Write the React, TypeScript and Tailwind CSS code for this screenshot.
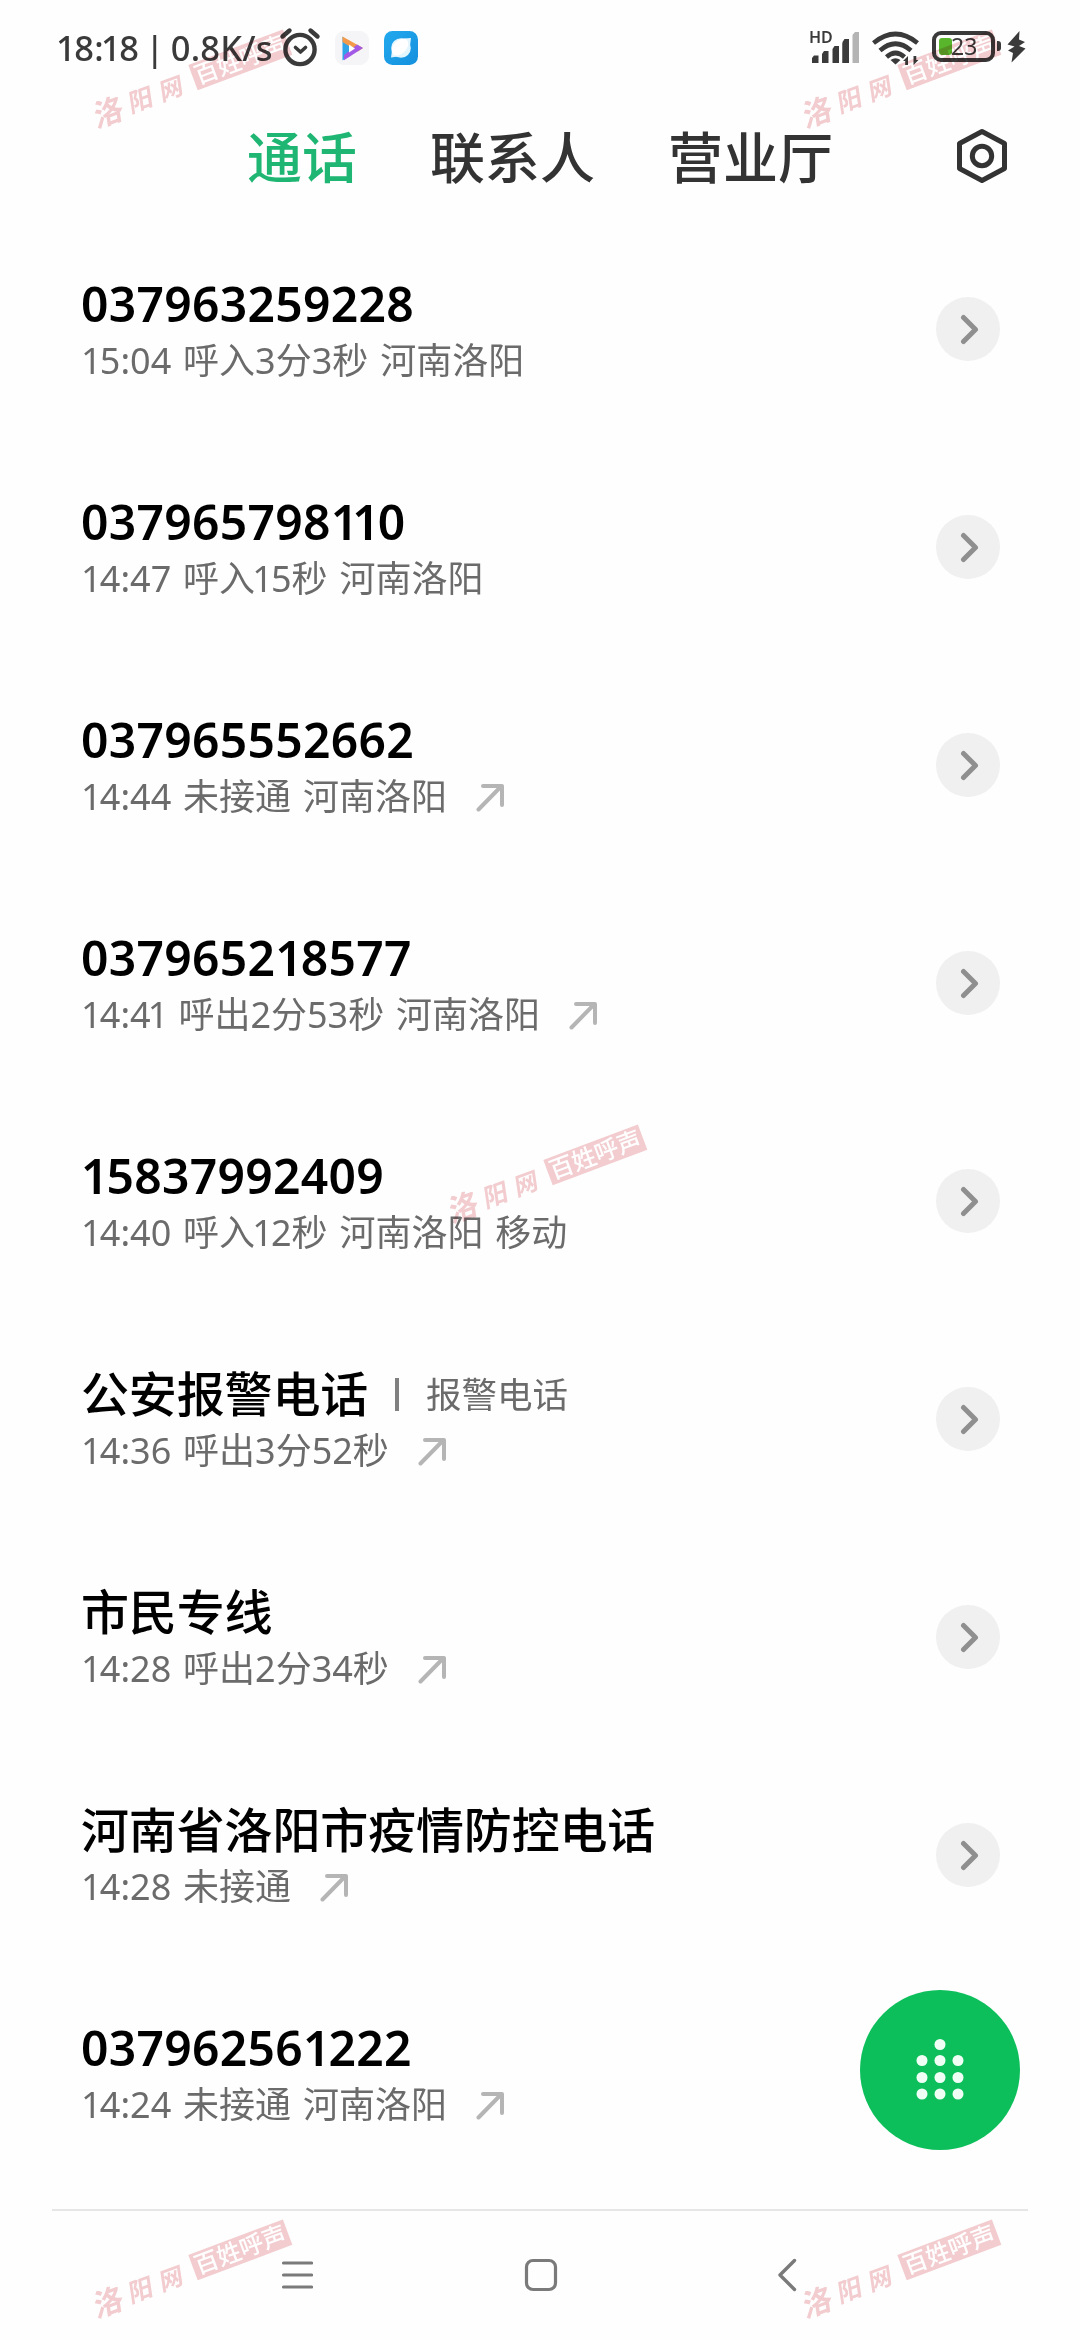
import { Fragment } from "react";

type Call = {
  name: string;
  label?: string;
  detail: string;
  outgoing?: boolean;
};

const calls: Call[] = [
  { name: "037963259228", detail: "15:04 呼入3分3秒 河南洛阳" },
  { name: "037965798110", detail: "14:47 呼入15秒 河南洛阳" },
  { name: "037965552662", detail: "14:44 未接通 河南洛阳", outgoing: true },
  { name: "037965218577", detail: "14:41 呼出2分53秒 河南洛阳", outgoing: true },
  { name: "15837992409", detail: "14:40 呼入12秒 河南洛阳 移动" },
  { name: "公安报警电话", label: "报警电话", detail: "14:36 呼出3分52秒", outgoing: true },
  { name: "市民专线", detail: "14:28 呼出2分34秒", outgoing: true },
  { name: "河南省洛阳市疫情防控电话", detail: "14:28 未接通", outgoing: true },
  { name: "037962561222", detail: "14:24 未接通 河南洛阳", outgoing: true },
];

/** Sets each "1" tighter than the tabular digits round it. */
function Digits({ text }: { text: string }) {
  return (
    <>
      {text.split(/(1)/).map((part, i) =>
        part === "1" ? (
          <span key={i} className="-mr-[0.05em] -ml-[0.08em] first:ml-0">1</span>
        ) : (
          <Fragment key={i}>{part}</Fragment>
        ),
      )}
    </>
  );
}

function StatusBar() {
  return (
    <header className="flex h-[96px] items-center pr-[54px] pl-[56px] text-[#3a3a3a]">
      <div className="w-[222px] text-[34.5px] font-medium leading-[96px] tracking-[0.2px] whitespace-pre [word-spacing:-3px]">
        <Digits text="18:18 | 0.8K/s" />
      </div>
      <svg className="h-[42px] w-[44px]" viewBox="0 0 44 42" fill="none" stroke="#3a3a3a" strokeWidth="4.400" strokeLinecap="round" strokeLinejoin="round">
        <circle cx="22" cy="22.500" r="14.600" />
        <path d="M4.500 9.500l7-6M39.500 9.500l-7-6" />
        <path d="M17.500 20.500l5 4.500 5-4.500" strokeWidth="3.600" />
      </svg>
      <svg className="ml-[13px] h-[34px] w-[34px]" viewBox="0 0 34 34">
        <rect width="34" height="34" rx="9" fill="#f5f5f8" />
        <path d="M7.500 5.500v24l6.500-4.500V12z" fill="#2fa4e8" />
        <path d="M7.500 5.500L28 17l-5 3.500L7.500 11z" fill="#f39a4a" />
        <path d="M28 17L9 29.200v-5L22 13.600z" fill="#a259e6" />
        <path d="M14 13.500v8l6-4z" fill="#fff" />
      </svg>
      <svg className="ml-[15px] h-[34px] w-[34px]" viewBox="0 0 34 34">
        <defs>
          <linearGradient id="browser" x1="0" y1="0" x2="1" y2="1">
            <stop offset="0" stopColor="#22a9ee" />
            <stop offset="1" stopColor="#1590dd" />
          </linearGradient>
        </defs>
        <rect width="34" height="34" rx="8.500" fill="url(#browser)" />
        <circle cx="17" cy="17" r="9.800" fill="#e3f5fd" />
        <path d="M20 7.500L27 7l-1 7.500zM7 26.500l1-7 6 6z" fill="#e3f5fd" />
        <ellipse cx="16" cy="16" rx="10" ry="6.500" transform="rotate(-47 16 16)" fill="#fff" />
      </svg>

      <div className="ml-auto flex h-[34px] items-start">
        <div className="relative h-[34px] w-[49px]">
          <span className="absolute -top-[1px] -left-[2px] text-[16px] font-semibold leading-[14px]">HD</span>
          <svg className="h-[34px] w-[49px]" viewBox="0 0 49 34" fill="#3a3a3a">
            <path d="M1 27l2-2.500h4.500V32H1z M11 23l2-3h4.500v12H11z M21.500 18l2-3H28v17h-6.500z M31.500 12.500l2-3H38V32h-6.500z" />
            <path d="M31.500 11l2-3H38v24h-6.500z" />
            <path d="M41.500 4l2.500-3h4v31h-6.500z" fill="#b4b4b4" />
          </svg>
        </div>
        <svg className="ml-[12px] h-[35px] w-[47px]" viewBox="0 0 47 35" fill="none" stroke="#3a3a3a" strokeWidth="4.600">
          <path d="M1.500 12Q23.500-6 45.500 12" />
          <path d="M8 19.500Q23.500 6 39 19.500" />
          <path d="M14.500 26Q23.500 18 32.500 26" />
          <path d="M18.500 29Q23.500 25.500 28.500 29L23.500 33.500z" fill="#3a3a3a" stroke="none" />
          <path d="M31 30l5-5v9h-2.800v-4zM46.500 29l-5 5v-9h2.800v4z" fill="#3a3a3a" stroke="none" />
        </svg>
        <div className="relative ml-[13px] flex h-[31px] w-[63px] items-center rounded-[9px] border-[4px] border-[#3a3a3a] pl-[3px]">
          <span className="h-[17px] w-[13px] rounded-[3px] bg-[#59b52b]" />
          <span className="-ml-[1px] text-[23px] leading-[23px]">23</span>
          <span className="absolute top-[6px] -right-[10px] h-[10px] w-[4px] rounded-r-[3px] bg-[#3a3a3a]" />
        </div>
        <svg className="ml-[12px] h-[32px] w-[19px]" viewBox="0 0 19 32" fill="#3a3a3a">
          <path d="M12.500 0L0.500 13.500l7 2L1 19.500l5 2.500L4.500 31.500 18.500 17.500l-6.500-2.500 6-4-6-2.500z" />
        </svg>
      </div>
    </header>
  );
}

function Tabs() {
  return (
    <nav className="flex h-[124px] items-start pl-[247px] text-[55px] font-medium leading-[80px] text-[#333]">
      <span className="mt-[21px] text-[#1fb573]">通话</span>
      <span className="mt-[21px] ml-[73px]">联系人</span>
      <span className="mt-[21px] ml-[73px]">营业厅</span>
      <svg className="mt-[32px] ml-[123px] h-[56px] w-[52px]" viewBox="0 0 52 56" fill="none" stroke="#333" strokeWidth="5" strokeLinejoin="round">
        <path d="M26 3.500L48.500 15.500V40.500L26 52.500 3.500 40.500V15.500z" />
        <circle cx="26" cy="28" r="9.700" />
      </svg>
    </nav>
  );
}

function OutgoingArrow() {
  return (
    <svg className="ml-[29px] h-[29px] w-[29px]" viewBox="0 0 29 29" fill="none" stroke="#b5b5b5" strokeWidth="4" strokeLinecap="round" strokeLinejoin="round">
      <path d="M2.500 26.500L25.500 3M7 3H26V22" />
    </svg>
  );
}

function CallRow({ call }: { call: Call }) {
  const isNumber = /^\d+$/.test(call.name);
  return (
    <li className="flex h-[218px] items-center justify-between pr-[80px] pl-[81px]">
      <div className="flex flex-col">
        <div className="flex h-[60px] items-center whitespace-nowrap">
          <span
            className={
              isNumber
                ? "text-[48px] font-semibold leading-[60px] tracking-[0.3px] text-black"
                : "text-[48px] font-medium leading-[60px] tracking-[-0.15px] text-black"
            }
          >
            <Digits text={call.name} />
          </span>
          {call.label && (
            <>
              <span className="ml-[27px] h-[33px] w-[4px] bg-[#808080]" />
              <span className="ml-[27px] text-[35.500px] leading-[60px] text-[#6b6b6b]">{call.label}</span>
            </>
          )}
        </div>
        <div className="mt-[2px] -mb-[2px] flex h-[50px] items-center">
          <span className="text-[36px] leading-[50px] whitespace-nowrap text-[#6b6b6b] [word-spacing:2.5px]">
            <Digits text={call.detail} />
          </span>
          {call.outgoing && <OutgoingArrow />}
        </div>
      </div>
      <button className="flex h-[64px] w-[64px] items-center justify-center rounded-full bg-[#f0f0f0]">
        <svg className="h-[32px] w-[32px]" viewBox="0 0 32 32" fill="none" stroke="#8f8f8f" strokeWidth="5" strokeLinecap="round" strokeLinejoin="round">
          <path d="M11.500 4.500L23.500 16.500 11.500 28.500" />
        </svg>
      </button>
    </li>
  );
}

function DialPad() {
  return (
    <button className="absolute right-[60px] bottom-[190px] flex h-[160px] w-[160px] items-center justify-center rounded-full bg-[#0cbf5b]">
      <svg className="h-[62px] w-[50px]" viewBox="0 0 50 62" fill="#effff6">
        <circle cx="25" cy="5.500" r="5.500" />
        {[21.5, 38.5, 55].map((y) =>
          [7, 25, 43].map((x) => <circle key={`${x}-${y}`} cx={x} cy={y} r="5.500" />),
        )}
      </svg>
    </button>
  );
}

function NavBar() {
  return (
    <footer className="mx-[52px] flex h-[130px] items-start border-t-2 border-[#e6e6e6] text-[#7a7a7a]">
      <svg className="mt-[48px] ml-[229px] h-[32px] w-[32px]" viewBox="0 0 32 32" fill="none" stroke="currentColor" strokeWidth="3.200" strokeLinecap="round">
        <path d="M2.500 4h28M2.500 16h28M2.500 28h28" />
      </svg>
      <svg className="mt-[47px] ml-[211px] h-[34px] w-[34px]" viewBox="0 0 34 34" fill="none" stroke="currentColor" strokeWidth="3.200">
        <rect x="2.500" y="2.500" width="29" height="29" rx="6.500" />
      </svg>
      <svg className="mt-[47px] ml-[219px] h-[34px] w-[20px]" viewBox="0 0 20 34" fill="none" stroke="currentColor" strokeWidth="3.400" strokeLinecap="round" strokeLinejoin="round">
        <path d="M17.500 2.500L3 17l14.500 14.500" />
      </svg>
    </footer>
  );
}

function Watermark({ className }: { className: string }) {
  return (
    <div
      className={`pointer-events-none absolute flex h-[27px] w-[207px] origin-top-left rotate-[-20.5deg] items-center justify-between whitespace-nowrap mix-blend-multiply ${className}`}
      aria-hidden
    >
      <span className="flex h-[27px] w-[105px] items-center pt-[4px] font-bold text-[#f3cdd0]">
        <span className="-skew-x-12 text-[30px] leading-[27px]">洛</span>
        <span className="ml-[7px] -skew-x-12 text-[25px] leading-[27px]">阳</span>
        <span className="ml-[8px] -skew-x-12 text-[24px] leading-[27px]">网</span>
      </span>
      <span className="h-[27px] w-[101px] bg-[#f3cdd0] text-center text-[24px] font-medium leading-[26px] text-white">百姓呼声</span>
    </div>
  );
}

export default function App() {
  return (
    <div className="relative flex h-[2340px] w-[1080px] flex-col overflow-hidden bg-[#fefefe] font-['Noto_Sans','Noto_Sans_CJK_SC',sans-serif]">
      <StatusBar />
      <Tabs />
      <ul className="h-[1989px]">
        {calls.map((call) => (
          <CallRow key={call.name} call={call} />
        ))}
      </ul>
      <NavBar />
      <DialPad />
      <Watermark className="top-[102px] left-[89px]" />
      <Watermark className="top-[102px] left-[798px]" />
      <Watermark className="top-[1197px] left-[444px]" />
      <Watermark className="top-[2292px] left-[89px]" />
      <Watermark className="top-[2292px] left-[798px]" />
    </div>
  );
}
